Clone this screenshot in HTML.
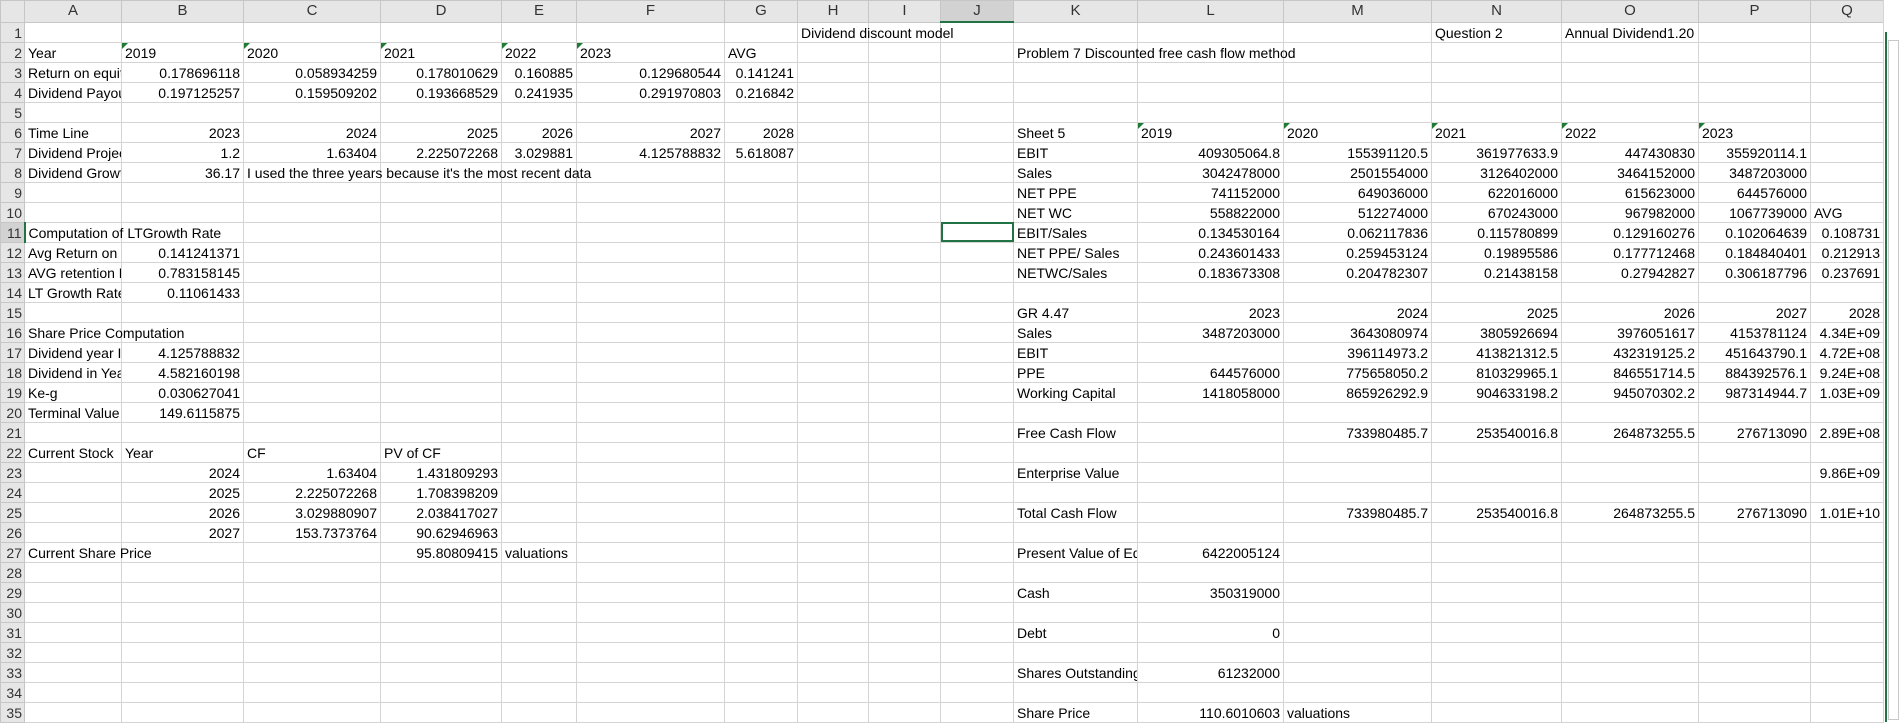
<!DOCTYPE html>
<html><head><meta charset="utf-8">
<style>
*{margin:0;padding:0;box-sizing:border-box}
body{width:1902px;height:718px;overflow:hidden;background:#fff;font-family:"Liberation Sans",Arial,sans-serif;font-size:14px;color:#000;position:relative}
table{border-collapse:collapse;table-layout:fixed;position:absolute;left:0;top:0;width:1883px}
td{height:20px;border:1px solid #d4d4d4;white-space:nowrap;overflow:visible;padding:0 3px;vertical-align:bottom;line-height:18px;position:relative}
tr.h td{height:21px;background:#e6e6e6;border:1px solid #c6c6c6;text-align:center;color:#333;font-size:15px;vertical-align:middle;line-height:20px}
td.rh{background:#e6e6e6;border:1px solid #c6c6c6;color:#333;text-align:right;padding:0 2px 0 0;font-size:14px;overflow:hidden}
.r{text-align:right}
.c{overflow:hidden}
.t::before{content:"";position:absolute;left:0;top:0;border-top:6px solid #1e7b34;border-right:6px solid transparent}
.sel{outline:2px solid #217346;outline-offset:-2px}
#sb{position:absolute;left:1883px;top:0;width:19px;height:718px;background:#fff;border-left:1px solid #d4d4d4}
#sb div{position:absolute;left:4px;top:40px;width:11px;height:680px;background:#fff;border:1px solid #c8c8c8}
#sb span{position:absolute;left:1px;top:32px;width:2px;height:690px;background:#217346}
</style></head><body>
<table>
<colgroup><col style="width:24px"><col style="width:97px"><col style="width:122px"><col style="width:137px"><col style="width:121px"><col style="width:75px"><col style="width:148px"><col style="width:73px"><col style="width:71px"><col style="width:72px"><col style="width:73px"><col style="width:124px"><col style="width:146px"><col style="width:148px"><col style="width:130px"><col style="width:137px"><col style="width:112px"><col style="width:73px"></colgroup>
<tr class="h"><td></td><td>A</td><td>B</td><td>C</td><td>D</td><td>E</td><td>F</td><td>G</td><td>H</td><td>I</td><td style="background:#d2d2d2;border-bottom:2px solid #217346">J</td><td>K</td><td>L</td><td>M</td><td>N</td><td>O</td><td>P</td><td>Q</td></tr>
<tr><td class="rh">1</td><td></td><td></td><td></td><td></td><td></td><td></td><td></td><td>Dividend discount model</td><td></td><td></td><td></td><td></td><td></td><td>Question 2</td><td>Annual Dividend1.20</td><td></td><td></td></tr>
<tr><td class="rh">2</td><td>Year</td><td class="t">2019</td><td class="t">2020</td><td class="t">2021</td><td class="t">2022</td><td class="t">2023</td><td>AVG</td><td></td><td></td><td></td><td>Problem 7 Discounted free cash flow method</td><td></td><td></td><td></td><td></td><td></td><td></td></tr>
<tr><td class="rh">3</td><td class="c">Return on equity</td><td class="r">0.178696118</td><td class="r">0.058934259</td><td class="r">0.178010629</td><td class="r">0.160885</td><td class="r">0.129680544</td><td class="r">0.141241</td><td></td><td></td><td></td><td></td><td></td><td></td><td></td><td></td><td></td><td></td></tr>
<tr><td class="rh">4</td><td class="c">Dividend Payout</td><td class="r">0.197125257</td><td class="r">0.159509202</td><td class="r">0.193668529</td><td class="r">0.241935</td><td class="r">0.291970803</td><td class="r">0.216842</td><td></td><td></td><td></td><td></td><td></td><td></td><td></td><td></td><td></td><td></td></tr>
<tr><td class="rh">5</td><td></td><td></td><td></td><td></td><td></td><td></td><td></td><td></td><td></td><td></td><td></td><td></td><td></td><td></td><td></td><td></td><td></td></tr>
<tr><td class="rh">6</td><td>Time Line</td><td class="r">2023</td><td class="r">2024</td><td class="r">2025</td><td class="r">2026</td><td class="r">2027</td><td class="r">2028</td><td></td><td></td><td></td><td>Sheet 5</td><td class="t">2019</td><td class="t">2020</td><td class="t">2021</td><td class="t">2022</td><td class="t">2023</td><td></td></tr>
<tr><td class="rh">7</td><td class="c">Dividend Projection</td><td class="r">1.2</td><td class="r">1.63404</td><td class="r">2.225072268</td><td class="r">3.029881</td><td class="r">4.125788832</td><td class="r">5.618087</td><td></td><td></td><td></td><td>EBIT</td><td class="r">409305064.8</td><td class="r">155391120.5</td><td class="r">361977633.9</td><td class="r">447430830</td><td class="r">355920114.1</td><td></td></tr>
<tr><td class="rh">8</td><td class="c">Dividend Growth</td><td class="r">36.17</td><td>I used the three years because it's the most recent data</td><td></td><td></td><td></td><td></td><td></td><td></td><td></td><td>Sales</td><td class="r">3042478000</td><td class="r">2501554000</td><td class="r">3126402000</td><td class="r">3464152000</td><td class="r">3487203000</td><td></td></tr>
<tr><td class="rh">9</td><td></td><td></td><td></td><td></td><td></td><td></td><td></td><td></td><td></td><td></td><td>NET PPE</td><td class="r">741152000</td><td class="r">649036000</td><td class="r">622016000</td><td class="r">615623000</td><td class="r">644576000</td><td></td></tr>
<tr><td class="rh">10</td><td></td><td></td><td></td><td></td><td></td><td></td><td></td><td></td><td></td><td></td><td>NET WC</td><td class="r">558822000</td><td class="r">512274000</td><td class="r">670243000</td><td class="r">967982000</td><td class="r">1067739000</td><td>AVG</td></tr>
<tr><td class="rh" style="background:#d2d2d2;border-right:2px solid #217346">11</td><td>Computation of LTGrowth Rate</td><td></td><td></td><td></td><td></td><td></td><td></td><td></td><td></td><td class="sel"></td><td>EBIT/Sales</td><td class="r">0.134530164</td><td class="r">0.062117836</td><td class="r">0.115780899</td><td class="r">0.129160276</td><td class="r">0.102064639</td><td class="r">0.108731</td></tr>
<tr><td class="rh">12</td><td class="c">Avg Return on</td><td class="r">0.141241371</td><td></td><td></td><td></td><td></td><td></td><td></td><td></td><td></td><td>NET PPE/ Sales</td><td class="r">0.243601433</td><td class="r">0.259453124</td><td class="r">0.19895586</td><td class="r">0.177712468</td><td class="r">0.184840401</td><td class="r">0.212913</td></tr>
<tr><td class="rh">13</td><td class="c">AVG retention Ratio</td><td class="r">0.783158145</td><td></td><td></td><td></td><td></td><td></td><td></td><td></td><td></td><td>NETWC/Sales</td><td class="r">0.183673308</td><td class="r">0.204782307</td><td class="r">0.21438158</td><td class="r">0.27942827</td><td class="r">0.306187796</td><td class="r">0.237691</td></tr>
<tr><td class="rh">14</td><td class="c">LT Growth Rate</td><td class="r">0.11061433</td><td></td><td></td><td></td><td></td><td></td><td></td><td></td><td></td><td></td><td></td><td></td><td></td><td></td><td></td><td></td></tr>
<tr><td class="rh">15</td><td></td><td></td><td></td><td></td><td></td><td></td><td></td><td></td><td></td><td></td><td>GR 4.47</td><td class="r">2023</td><td class="r">2024</td><td class="r">2025</td><td class="r">2026</td><td class="r">2027</td><td class="r">2028</td></tr>
<tr><td class="rh">16</td><td>Share Price Computation</td><td></td><td></td><td></td><td></td><td></td><td></td><td></td><td></td><td></td><td>Sales</td><td class="r">3487203000</td><td class="r">3643080974</td><td class="r">3805926694</td><td class="r">3976051617</td><td class="r">4153781124</td><td class="r">4.34E+09</td></tr>
<tr><td class="rh">17</td><td class="c">Dividend year I</td><td class="r">4.125788832</td><td></td><td></td><td></td><td></td><td></td><td></td><td></td><td></td><td>EBIT</td><td></td><td class="r">396114973.2</td><td class="r">413821312.5</td><td class="r">432319125.2</td><td class="r">451643790.1</td><td class="r">4.72E+08</td></tr>
<tr><td class="rh">18</td><td class="c">Dividend in Year</td><td class="r">4.582160198</td><td></td><td></td><td></td><td></td><td></td><td></td><td></td><td></td><td>PPE</td><td class="r">644576000</td><td class="r">775658050.2</td><td class="r">810329965.1</td><td class="r">846551714.5</td><td class="r">884392576.1</td><td class="r">9.24E+08</td></tr>
<tr><td class="rh">19</td><td>Ke-g</td><td class="r">0.030627041</td><td></td><td></td><td></td><td></td><td></td><td></td><td></td><td></td><td>Working Capital</td><td class="r">1418058000</td><td class="r">865926292.9</td><td class="r">904633198.2</td><td class="r">945070302.2</td><td class="r">987314944.7</td><td class="r">1.03E+09</td></tr>
<tr><td class="rh">20</td><td class="c">Terminal Value</td><td class="r">149.6115875</td><td></td><td></td><td></td><td></td><td></td><td></td><td></td><td></td><td></td><td></td><td></td><td></td><td></td><td></td><td></td></tr>
<tr><td class="rh">21</td><td></td><td></td><td></td><td></td><td></td><td></td><td></td><td></td><td></td><td></td><td>Free Cash Flow</td><td></td><td class="r">733980485.7</td><td class="r">253540016.8</td><td class="r">264873255.5</td><td class="r">276713090</td><td class="r">2.89E+08</td></tr>
<tr><td class="rh">22</td><td class="c">Current Stock</td><td>Year</td><td>CF</td><td>PV of CF</td><td></td><td></td><td></td><td></td><td></td><td></td><td></td><td></td><td></td><td></td><td></td><td></td><td></td></tr>
<tr><td class="rh">23</td><td></td><td class="r">2024</td><td class="r">1.63404</td><td class="r">1.431809293</td><td></td><td></td><td></td><td></td><td></td><td></td><td>Enterprise Value</td><td></td><td></td><td></td><td></td><td></td><td class="r">9.86E+09</td></tr>
<tr><td class="rh">24</td><td></td><td class="r">2025</td><td class="r">2.225072268</td><td class="r">1.708398209</td><td></td><td></td><td></td><td></td><td></td><td></td><td></td><td></td><td></td><td></td><td></td><td></td><td></td></tr>
<tr><td class="rh">25</td><td></td><td class="r">2026</td><td class="r">3.029880907</td><td class="r">2.038417027</td><td></td><td></td><td></td><td></td><td></td><td></td><td>Total Cash Flow</td><td></td><td class="r">733980485.7</td><td class="r">253540016.8</td><td class="r">264873255.5</td><td class="r">276713090</td><td class="r">1.01E+10</td></tr>
<tr><td class="rh">26</td><td></td><td class="r">2027</td><td class="r">153.7373764</td><td class="r">90.62946963</td><td></td><td></td><td></td><td></td><td></td><td></td><td></td><td></td><td></td><td></td><td></td><td></td><td></td></tr>
<tr><td class="rh">27</td><td>Current Share Price</td><td></td><td></td><td class="r">95.80809415</td><td>valuations</td><td></td><td></td><td></td><td></td><td></td><td class="c">Present Value of Equity</td><td class="r">6422005124</td><td></td><td></td><td></td><td></td><td></td></tr>
<tr><td class="rh">28</td><td></td><td></td><td></td><td></td><td></td><td></td><td></td><td></td><td></td><td></td><td></td><td></td><td></td><td></td><td></td><td></td><td></td></tr>
<tr><td class="rh">29</td><td></td><td></td><td></td><td></td><td></td><td></td><td></td><td></td><td></td><td></td><td>Cash</td><td class="r">350319000</td><td></td><td></td><td></td><td></td><td></td></tr>
<tr><td class="rh">30</td><td></td><td></td><td></td><td></td><td></td><td></td><td></td><td></td><td></td><td></td><td></td><td></td><td></td><td></td><td></td><td></td><td></td></tr>
<tr><td class="rh">31</td><td></td><td></td><td></td><td></td><td></td><td></td><td></td><td></td><td></td><td></td><td>Debt</td><td class="r">0</td><td></td><td></td><td></td><td></td><td></td></tr>
<tr><td class="rh">32</td><td></td><td></td><td></td><td></td><td></td><td></td><td></td><td></td><td></td><td></td><td></td><td></td><td></td><td></td><td></td><td></td><td></td></tr>
<tr><td class="rh">33</td><td></td><td></td><td></td><td></td><td></td><td></td><td></td><td></td><td></td><td></td><td class="c">Shares Outstanding</td><td class="r">61232000</td><td></td><td></td><td></td><td></td><td></td></tr>
<tr><td class="rh">34</td><td></td><td></td><td></td><td></td><td></td><td></td><td></td><td></td><td></td><td></td><td></td><td></td><td></td><td></td><td></td><td></td><td></td></tr>
<tr><td class="rh">35</td><td></td><td></td><td></td><td></td><td></td><td></td><td></td><td></td><td></td><td></td><td>Share Price</td><td class="r">110.6010603</td><td>valuations</td><td></td><td></td><td></td><td></td></tr>
</table>
<div id="sb"><span></span><div></div></div>
</body></html>
